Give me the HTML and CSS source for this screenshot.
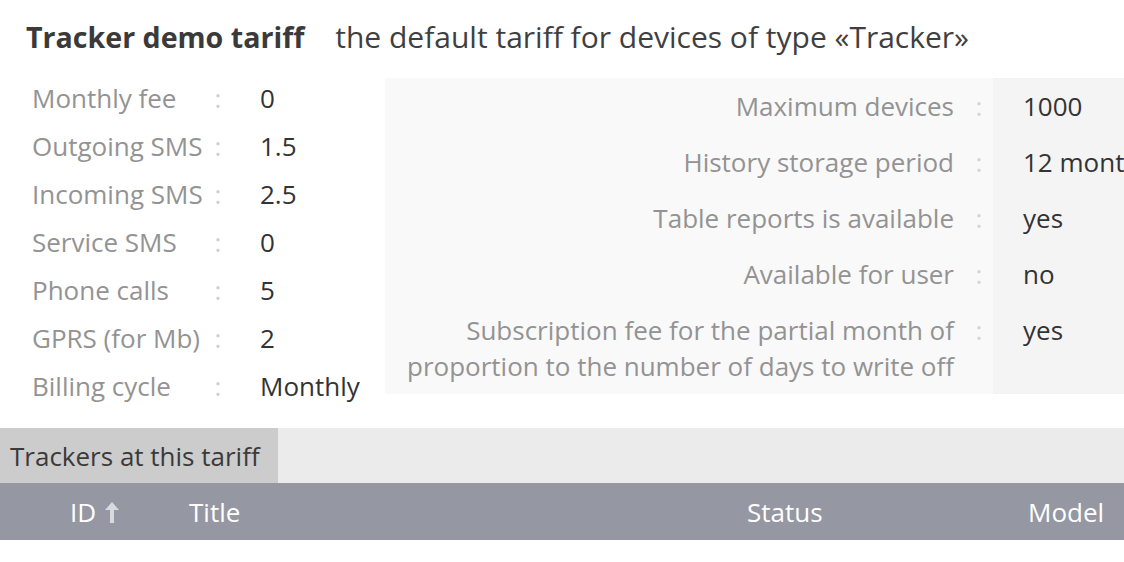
FILE: index.html
```html
<!DOCTYPE html>
<html lang="en">
<head>
<meta charset="utf-8">
<title>Tracker demo tariff</title>
<link rel="stylesheet" href="styles.css">
</head>
<body>
<div class="page">
  <header class="head">
    <h1 class="title">Tracker demo tariff</h1>
    <span class="subtitle">the default tariff for devices of type «Tracker»</span>
  </header>

  <section class="info">
    <div class="prices">
      <div class="lbl">Monthly fee</div><div class="colon">:</div><div class="val">0</div>
      <div class="lbl">Outgoing SMS</div><div class="colon">:</div><div class="val">1.5</div>
      <div class="lbl">Incoming SMS</div><div class="colon">:</div><div class="val">2.5</div>
      <div class="lbl">Service SMS</div><div class="colon">:</div><div class="val">0</div>
      <div class="lbl">Phone calls</div><div class="colon">:</div><div class="val">5</div>
      <div class="lbl">GPRS (for Mb)</div><div class="colon">:</div><div class="val">2</div>
      <div class="lbl">Billing cycle</div><div class="colon">:</div><div class="val">Monthly</div>
    </div>
    <div class="options">
      <div class="olbl">Maximum devices</div><div class="ocolon">:</div><div class="oval">1000</div>
      <div class="olbl">History storage period</div><div class="ocolon">:</div><div class="oval">12 months</div>
      <div class="olbl">Table reports is available</div><div class="ocolon">:</div><div class="oval">yes</div>
      <div class="olbl">Available for user</div><div class="ocolon">:</div><div class="oval">no</div>
      <div class="olbl">Subscription fee for the partial month of proportion to the number of days to write off</div><div class="ocolon">:</div><div class="oval">yes</div>
    </div>
  </section>

  <nav class="tabs">
    <div class="tab active">Trackers at this tariff</div>
  </nav>

  <div class="grid-head">
    <div class="c-id">ID
      <svg class="sort" width="16" height="22" viewBox="0 0 16 22" aria-hidden="true">
        <path d="M8 1L15 9H10V22H6V9H1Z" fill="#d9dadf"/>
      </svg>
    </div>
    <div class="c-title">Title</div>
    <div class="c-status">Status</div>
    <div class="c-model">Model</div>
  </div>
  <div class="grid-row">
    <div class="c-id">1</div>
    <div class="c-title">Tracker</div>
    <div class="c-status off">Offline</div>
    <div class="c-model">—</div>
  </div>
</div>
</body>
</html>
```
FILE: styles.css
```css
html, body {
  margin: 0;
  padding: 0;
  overflow: hidden;
  background: #ffffff;
}

.page {
  font-family: "Open Sans", "Noto Sans", sans-serif;
  font-size: 26px;
  color: #333333;
  width: 1124px;
}

.head {
  height: 75px;
  display: flex;
  align-items: center;
  padding-left: 26px;
  padding-bottom: 3px;
  box-sizing: border-box;
  gap: 31px;
  white-space: nowrap;
}

.title {
  margin: 0;
  font-size: 28.6px;
  font-weight: 700;
  color: #3a3a3a;
}

.subtitle {
  font-size: 30px;
  color: #3f3f3f;
}

.info {
  display: flex;
  align-items: flex-start;
}

.prices {
  width: 385px;
  flex: none;
  box-sizing: border-box;
  padding-left: 32px;
  display: grid;
  grid-template-columns: 172px 28px auto;
  grid-auto-rows: 48px;
  align-items: center;
  margin-top: -1px;
}

.lbl {
  color: #939393;
  white-space: nowrap;
}

.colon {
  text-align: center;
  color: #cfcfcf;
}

.val {
  padding-left: 28px;
  color: #333333;
  white-space: nowrap;
}

.options {
  flex: none;
  margin-top: 3px;
  display: grid;
  grid-template-columns: 580px 28px 220px;
  background: #f9f9f9;
  line-height: 36px;
}

.olbl {
  padding: 10px 11px 10px 20px;
  text-align: right;
  color: #939393;
}

.ocolon {
  padding: 10px 0;
  text-align: center;
  color: #d4d4d4;
}

.oval {
  padding: 10px 0 10px 30px;
  background: #f4f4f4;
  color: #333333;
  white-space: nowrap;
}

.tabs {
  margin-top: 18px;
  height: 55px;
  background: #ebebeb;
  display: flex;
}

.tab {
  display: flex;
  align-items: center;
  padding: 0 18px 0 10px;
  color: #3a3a3a;
}

.tab.active {
  background: #cccccc;
}

.grid-head,
.grid-row {
  display: grid;
  grid-template-columns: 189px 558px 281px 1fr;
  align-items: center;
}

.grid-head {
  height: 57px;
  background: #9597a3;
  color: #ffffff;
}

.grid-head .c-id {
  padding-left: 70px;
  display: flex;
  align-items: center;
  gap: 8px;
}

.sort {
  display: block;
}

.grid-row {
  padding-top: 24px;
  line-height: 36px;
  color: #333333;
}

.grid-row .c-id {
  padding-left: 70px;
}

.grid-row .off {
  color: #e0504a;
}
```
